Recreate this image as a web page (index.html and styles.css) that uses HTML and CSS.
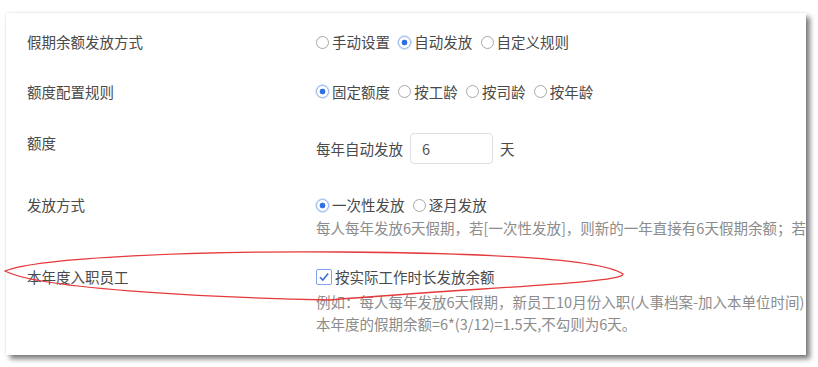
FILE: index.html
```html
<!DOCTYPE html>
<html lang="zh-CN">
	<head>
		<meta charset="UTF-8" />
		<meta name="viewport" content="width=device-width, initial-scale=1.0" />
		<title>假期余额设置</title>
		<link rel="stylesheet" href="styles.css">
	</head>
	<body>
		<div class="page">
			<div class="card">
				<div class="row">
					<div class="label">假期余额发放方式</div>
					<div class="field">
						<span class="radio"><i class="circle"></i>手动设置</span>
						<span class="radio"><i class="circle on"></i>自动发放</span>
						<span class="radio"><i class="circle"></i>自定义规则</span>
					</div>
				</div>

				<div class="row row-2">
					<div class="label">额度配置规则</div>
					<div class="field">
						<span class="radio"><i class="circle on"></i>固定额度</span>
						<span class="radio"><i class="circle"></i>按工龄</span>
						<span class="radio"><i class="circle"></i>按司龄</span>
						<span class="radio"><i class="circle"></i>按年龄</span>
					</div>
				</div>

				<div class="row row-3">
					<div class="label">额度</div>
					<div class="field quota">
						<span>每年自动发放</span>
						<input class="num" type="text" value="6" />
						<span class="unit">天</span>
					</div>
				</div>

				<div class="row row-4">
					<div class="label">发放方式</div>
					<div class="field">
						<div>
							<span class="radio"><i class="circle on"></i>一次性发放</span>
							<span class="radio"><i class="circle"></i>逐月发放</span>
						</div>
						<div class="hint">每人每年发放6天假期，若[一次性发放]，则新的一年直接有6天假期余额；若[逐月发放]，则每月发放0.5天</div>
					</div>
				</div>

				<div class="row row-5">
					<div class="label">本年度入职员工</div>
					<div class="field">
						<div class="check">
							<i class="box">
								<svg width="12" height="12" viewBox="0 0 12 12"><path d="M2 6.2 L4.8 9 L10.2 2.6" fill="none" stroke="#3c6fd6" stroke-width="1.6" /></svg>
							</i>按实际工作时长发放余额
						</div>
						<div class="hint hint-first">例如：每人每年发放6天假期，新员工10月份入职(人事档案-加入本单位时间)，则</div>
						<div class="hint">本年度的假期余额=6*(3/12)=1.5天,不勾则为6天。</div>
					</div>
				</div>
			</div>
		</div>

		<svg class="mark" width="818" height="367" viewBox="0 0 818 367">
			<path d="M5 271 C40 257 200 251 340 252 C480 253 600 259 623 274 C625 283 470 288 330 300 C230 298 40 290 5 271 Z" fill="none" stroke="#e5393b" stroke-width="1.3" />
		</svg>
	</body>
</html>
```

FILE: styles.css
```css
* {
	box-sizing: border-box;
}
body {
	font-family: "Noto Sans CJK SC", "Noto Sans", sans-serif;
	font-size: 14.5px;
	margin: 0;
	padding: 0;
	color: #333;
	background-color: #fff;
}
.page {
	height: 367px;
	padding: 13px 0 0 6px;
}
.card {
	width: 800px;
	height: 342px;
	padding: 18px 0 0 21px;
	background-color: #fff;
	overflow: hidden;
	box-shadow: 4px 4px 5px rgba(0, 0, 0, 0.5), 0 0 2px rgba(0, 0, 0, 0.15);
}
.row {
	display: flex;
	align-items: flex-start;
	line-height: 22px;
}
.row-2 {
	margin-top: 27px;
}
.row-3 {
	margin-top: 29px;
}
.row-4 {
	margin-top: 30px;
}
.row-5 {
	margin-top: 27px;
}
.label {
	flex: none;
	width: 289px;
	color: #4a4a4a;
}
.field {
	flex: none;
	white-space: nowrap;
	color: #4a4a4a;
}
.radio {
	display: inline-flex;
	align-items: center;
	margin-right: 5px;
}
.circle {
	display: inline-block;
	width: 13px;
	height: 13px;
	margin-right: 3px;
	border: 1px solid #a8a8a8;
	border-radius: 50%;
	background-color: #fff;
}
.circle.on {
	border-color: #8fb1ef;
	background: radial-gradient(circle, #2f6fe0 0 2.6px, #fff 3.2px);
	box-shadow: 0 0 0 1px #dbe6fb;
}
.quota {
	display: flex;
	align-items: center;
	margin-top: 1px;
}
.num {
	width: 83px;
	height: 31px;
	margin: 0 0 0 7px;
	padding: 0 0 0 11px;
	border: 1px solid #dcdfe6;
	border-radius: 4px;
	font-family: inherit;
	font-size: 14.5px;
	color: #555;
	outline: none;
}
.unit {
	margin-left: 7px;
}
.hint {
	color: #8c8c8c;
}
.hint-first {
	margin-top: 3px;
}
.check {
	display: flex;
	align-items: center;
}
.box {
	display: inline-flex;
	align-items: center;
	justify-content: center;
	width: 16px;
	height: 16px;
	margin-right: 3px;
	border: 1px solid #7fa4ea;
	border-radius: 2px;
	background-color: #fff;
}
.mark {
	position: absolute;
	top: 0;
	left: 0;
	pointer-events: none;
}
```
